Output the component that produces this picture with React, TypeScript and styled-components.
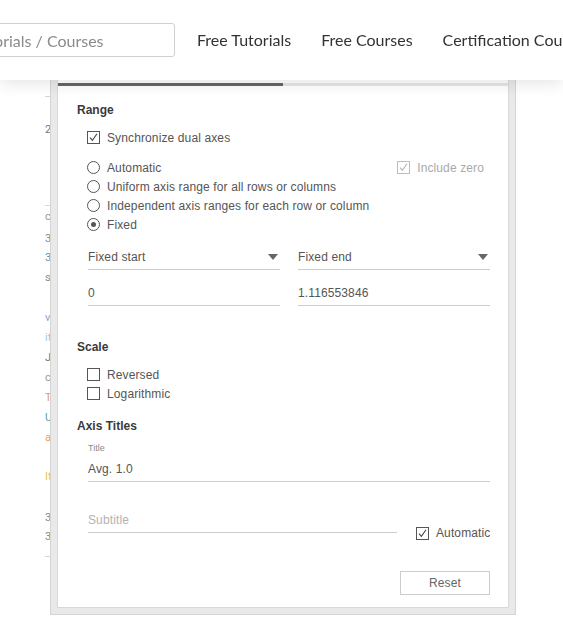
import React from "react";
import styled, { createGlobalStyle } from "styled-components";

const Global = createGlobalStyle`
  html, body { margin: 0; padding: 0; background: #fff; }
  body {
    width: 563px; height: 626px; overflow: hidden;
    font-family: "Liberation Sans", Arial, sans-serif;
  }
  #root { position: relative; width: 563px; height: 626px; overflow: hidden; }
`;

const Header = styled.header`
  position: fixed;
  top: 0; left: 0; right: 0;
  height: 80px;
  background: #fff;
  z-index: 10;
  box-shadow: 0 3px 16px rgba(0, 0, 0, 0.11);
  display: flex;
  align-items: center;
  font-family: Lato, "Open Sans", sans-serif;
  white-space: nowrap;
`;

const SearchBox = styled.div`
  box-sizing: border-box;
  flex: none;
  width: 267px;
  height: 34px;
  margin-left: -92px;
  margin-top: 0px;
  margin-right: 22px;
  border: 1px solid #cfcfcf;
  border-radius: 3px;
  padding-left: 12px;
  display: flex;
  align-items: center;
  font-size: 16px;
  color: #8a8a8a;
`;

const Nav = styled.nav`
  display: flex;
  gap: 30px;
  margin-top: -1px;
`;

const NavLink = styled.a`
  font-size: 16px;
  color: #333;
  text-decoration: none;
`;

const Backdrop = styled.div`
  padding-top: 88px;
  padding-left: 45px;
  display: flex;
  flex-direction: column;
  font-size: 11px;
  line-height: 14px;
  font-family: Roboto, sans-serif;
`;

const BgItem = styled.div<{ $mt: number; $color: string }>`
  margin-top: ${(p) => p.$mt}px;
  color: ${(p) => p.$color};
  height: 14px;
  white-space: nowrap;
`;

const BgRule = styled.div<{ $mt: number }>`
  margin-top: ${(p) => p.$mt}px;
  width: 40px;
  height: 1px;
  background: #d6d6d6;
`;

const Dialog = styled.div`
  position: absolute;
  left: 50px;
  top: 40px;
  width: 466px;
  box-sizing: border-box;
  border: 1px solid #d4d4d4;
  background: #e9e9e9;
  padding: 6px;
  z-index: 5;
`;

const Panel = styled.div`
  border: 1px solid #d9d9d9;
  background: #fff;
`;

const Tabs = styled.div`
  display: flex;
  height: 38px;
`;

const Tab = styled.div<{ $active?: boolean }>`
  box-sizing: border-box;
  border-bottom: 3px solid ${(p) => (p.$active ? "#666" : "#e6e6e6")};
  ${(p) => (p.$active ? "width: 225px;" : "flex: 1;")}
`;

const Body = styled.div`
  padding: 16px 18px 12px 19px;
  display: flex;
  flex-direction: column;
  font-size: 12px;
  letter-spacing: 0.12px;
  color: #555;
`;

const Heading = styled.div<{ $mt?: number }>`
  margin-top: ${(p) => p.$mt ?? 0}px;
  font-size: 12px;
  font-weight: 700;
  line-height: 16px;
  letter-spacing: 0;
  color: #3a3a3a;
`;

const Group = styled.div<{ $mt: number }>`
  margin-top: ${(p) => p.$mt}px;
  margin-left: 10px;
  display: flex;
  flex-direction: column;
`;

const SplitRow = styled.div`
  display: flex;
  justify-content: space-between;
  align-items: center;
`;

const Option = styled.label<{ $disabled?: boolean }>`
  display: flex;
  align-items: center;
  gap: 7px;
  height: 19px;
  color: ${(p) => (p.$disabled ? "#a9a9a9" : "#555")};
  white-space: nowrap;
  flex: none;
`;

const RightOption = styled.div`
  margin-right: 6px;
`;

const Box = styled.span<{ $disabled?: boolean }>`
  box-sizing: border-box;
  width: 13px;
  height: 13px;
  border: 1px solid ${(p) => (p.$disabled ? "#bdbdbd" : "#555")};
  background: #fff;
  display: flex;
  align-items: center;
  justify-content: center;
  flex: none;
`;

const Round = styled.span`
  box-sizing: border-box;
  width: 13px;
  height: 13px;
  border: 1px solid #555;
  border-radius: 50%;
  display: flex;
  align-items: center;
  justify-content: center;
  flex: none;
`;

const Dot = styled.span`
  width: 5px;
  height: 5px;
  border-radius: 50%;
  background: #555;
`;

const FieldGrid = styled.div<{ $mt: number }>`
  margin-top: ${(p) => p.$mt}px;
  margin-left: 11px;
  display: grid;
  grid-template-columns: 1fr 1fr;
  column-gap: 18px;
`;

const Select = styled.div`
  box-sizing: border-box;
  height: 26px;
  border-bottom: 1px solid #cccccc;
  display: flex;
  align-items: center;
  justify-content: space-between;
  padding-right: 2px;
  color: #555;
`;

const Arrow = styled.span`
  width: 0;
  height: 0;
  border-left: 5px solid transparent;
  border-right: 5px solid transparent;
  border-top: 6px solid #666;
  margin-top: 1px;
`;

const Field = styled.div<{ $placeholder?: boolean; $width?: number }>`
  box-sizing: border-box;
  height: 25px;
  border-bottom: 1px solid #cccccc;
  display: flex;
  align-items: center;
  color: ${(p) => (p.$placeholder ? "#b3b3b3" : "#555")};
  ${(p) => (p.$width ? `width: ${p.$width}px; flex: none;` : "")}
`;

const Indented = styled.div<{ $mt: number }>`
  margin-top: ${(p) => p.$mt}px;
  margin-left: 11px;
  display: flex;
  flex-direction: column;
`;

const SmallLabel = styled.div<{ $mt: number }>`
  margin-top: ${(p) => p.$mt}px;
  margin-left: 11px;
  font-size: 9px;
  line-height: 12px;
  letter-spacing: 0;
  color: #888;
`;

const SubtitleRow = styled.div<{ $mt: number }>`
  margin-top: ${(p) => p.$mt}px;
  margin-left: 11px;
  display: flex;
  align-items: flex-start;
  gap: 19px;
`;

const AutoOption = styled(Option)`
  margin-top: 15.5px;
`;

const Button = styled.button`
  align-self: flex-end;
  margin-top: 28.5px;
  box-sizing: border-box;
  width: 90px;
  height: 24px;
  border: 1px solid #cccccc;
  background: #fff;
  font-family: "Liberation Sans", Arial, sans-serif;
  font-size: 12px;
  letter-spacing: 0.12px;
  color: #666;
  padding: 0;
`;

const Check = ({ color = "#444" }: { color?: string }) => (
  <svg width="11" height="11" viewBox="0 0 11 11">
    <path d="M2 5.6 L4.4 8.4 L9 1.8" fill="none" stroke={color} strokeWidth="1.1" />
  </svg>
);

const CheckOption = ({
  label,
  checked,
  disabled,
}: {
  label: string;
  checked?: boolean;
  disabled?: boolean;
}) => (
  <Option $disabled={disabled}>
    <Box $disabled={disabled}>{checked && <Check color={disabled ? "#b5b5b5" : "#444"} />}</Box>
    {label}
  </Option>
);

const RadioOption = ({ label, checked }: { label: string; checked?: boolean }) => (
  <Option>
    <Round>{checked && <Dot />}</Round>
    {label}
  </Option>
);

const bgItems: { kind: "rule" | "text"; mt: number; text?: string; color?: string }[] = [
  { kind: "rule", mt: 8 },
  { kind: "text", mt: 26, text: "2018 Sales", color: "#777" },
  { kind: "rule", mt: 68 },
  { kind: "text", mt: 4, text: "category", color: "#9a9a9a" },
  { kind: "text", mt: 8, text: "3 items", color: "#8a8a8a" },
  { kind: "text", mt: 5, text: "3 views", color: "#5b8fc7" },
  { kind: "text", mt: 6, text: "sheets", color: "#8a8a8a" },
  { kind: "text", mt: 26, text: "values", color: "#8aa6d0" },
  { kind: "text", mt: 6, text: "items", color: "#a8c3e0" },
  { kind: "text", mt: 6, text: "June", color: "#777" },
  { kind: "text", mt: 6, text: "count", color: "#9a9a9a" },
  { kind: "text", mt: 6, text: "Total", color: "#e39a6a" },
  { kind: "text", mt: 6, text: "Units", color: "#5aa5a5" },
  { kind: "text", mt: 6, text: "avg", color: "#e7a25a" },
  { kind: "text", mt: 25, text: "Item", color: "#e5c85a" },
  { kind: "text", mt: 27, text: "3 rows", color: "#888" },
  { kind: "text", mt: 5, text: "3 cols", color: "#888" },
  { kind: "rule", mt: 12 },
];

export default function App() {
  return (
    <>
      <Global />
      <Header>
        <SearchBox>Search Tutorials / Courses</SearchBox>
        <Nav>
          <NavLink>Free Tutorials</NavLink>
          <NavLink>Free Courses</NavLink>
          <NavLink>Certification Courses</NavLink>
        </Nav>
      </Header>

      <Backdrop>
        {bgItems.map((it, i) =>
          it.kind === "rule" ? (
            <BgRule key={i} $mt={it.mt} />
          ) : (
            <BgItem key={i} $mt={it.mt} $color={it.color!}>
              {it.text}
            </BgItem>
          )
        )}
      </Backdrop>

      <Dialog>
        <Panel>
          <Tabs>
            <Tab $active />
            <Tab />
          </Tabs>
          <Body>
            <Heading>Range</Heading>
            <Group $mt={10}>
              <CheckOption label="Synchronize dual axes" checked />
            </Group>
            <Group $mt={11}>
              <SplitRow>
                <RadioOption label="Automatic" />
                <RightOption>
                  <CheckOption label="Include zero" checked disabled />
                </RightOption>
              </SplitRow>
              <RadioOption label="Uniform axis range for all rows or columns" />
              <RadioOption label="Independent axis ranges for each row or column" />
              <RadioOption label="Fixed" checked />
            </Group>
            <FieldGrid $mt={10}>
              <Select>
                Fixed start
                <Arrow />
              </Select>
              <Select>
                Fixed end
                <Arrow />
              </Select>
            </FieldGrid>
            <FieldGrid $mt={11}>
              <Field>0</Field>
              <Field>1.116553846</Field>
            </FieldGrid>

            <Heading $mt={33}>Scale</Heading>
            <Group $mt={10}>
              <CheckOption label="Reversed" />
              <CheckOption label="Logarithmic" />
            </Group>

            <Heading $mt={15}>Axis Titles</Heading>
            <SmallLabel $mt={8}>Title</SmallLabel>
            <Indented $mt={3}>
              <Field>Avg. 1.0</Field>
            </Indented>
            <SubtitleRow $mt={26}>
              <Field $placeholder $width={309}>
                Subtitle
              </Field>
              <AutoOption>
                <Box>
                  <Check />
                </Box>
                Automatic
              </AutoOption>
            </SubtitleRow>
            <Button>Reset</Button>
          </Body>
        </Panel>
      </Dialog>
    </>
  );
}
